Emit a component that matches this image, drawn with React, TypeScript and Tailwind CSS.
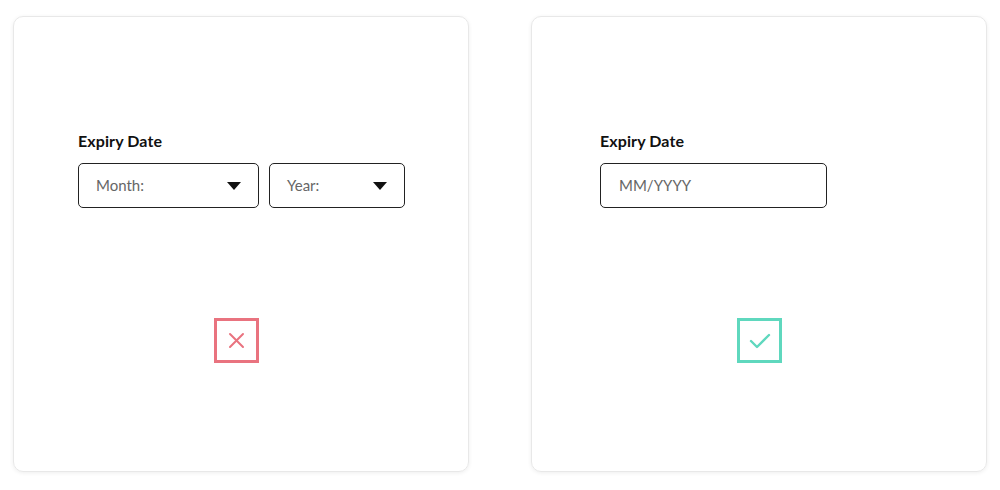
function Caret() {
    return (
        <svg width="14" height="10" viewBox="0 0 14 10" className="shrink-0">
            <path d="M0 1 L14 1 L7 9 Z" fill="#111"/>
        </svg>
    )
}

function App() {
    return (
        <div className="w-[1000px] h-[490px] bg-white flex gap-[62px] pl-[13px] pt-[16px] font-['Lato','Liberation_Sans',sans-serif]">
            {/* Dropdowns - bad */}
            <div className="w-[456px] h-[456px] rounded-[10px] border border-[#e8e8e8] shadow-[0_1px_4px_rgba(0,0,0,0.07)] flex flex-col pt-[114px] pl-[64px]">
                <label className="text-[16px] leading-[20px] font-bold text-[#111] tracking-[0.1px]">Expiry Date</label>
                <div className="flex gap-[10px] mt-[12px]">
                    <div className="w-[181px] h-[45px] rounded-[5px] border border-[#222] flex items-center justify-between pl-[17px] pr-[17px]">
                        <span className="text-[15px] text-[#666]">Month:</span>
                        <Caret/>
                    </div>
                    <div className="w-[136px] h-[45px] rounded-[5px] border border-[#222] flex items-center justify-between pl-[17px] pr-[17px]">
                        <span className="text-[15px] text-[#666]">Year:</span>
                        <Caret/>
                    </div>
                </div>
                <div className="mt-[110px] ml-[136px] w-[45px] h-[45px] border-[3px] border-[#e9737f] flex items-center justify-center">
                    <svg width="17" height="17" viewBox="0 0 17 17">
                        <path d="M2 2 L15 15 M15 2 L2 15" stroke="#e9737f" strokeWidth="2" strokeLinecap="round"/>
                    </svg>
                </div>
            </div>

            {/* Single input - good */}
            <div className="w-[456px] h-[456px] rounded-[10px] border border-[#e8e8e8] shadow-[0_1px_4px_rgba(0,0,0,0.07)] flex flex-col pt-[114px] pl-[68px]">
                <label className="text-[16px] leading-[20px] font-bold text-[#111] tracking-[0.1px]">Expiry Date</label>
                <div className="mt-[12px] w-[227px] h-[45px] rounded-[5px] border border-[#222] flex items-center pl-[18px]">
                    <span className="text-[15px] text-[#666]">MM/YYYY</span>
                </div>
                <div className="mt-[110px] ml-[137px] w-[45px] h-[45px] border-[3px] border-[#5fd8be] flex items-center justify-center">
                    <svg width="22" height="16" viewBox="0 0 22 16">
                        <path d="M2 8 L8 14 L20 2" stroke="#5fd8be" strokeWidth="2.4" strokeLinecap="round" strokeLinejoin="round" fill="none"/>
                    </svg>
                </div>
            </div>
        </div>
    )
}

export default App
